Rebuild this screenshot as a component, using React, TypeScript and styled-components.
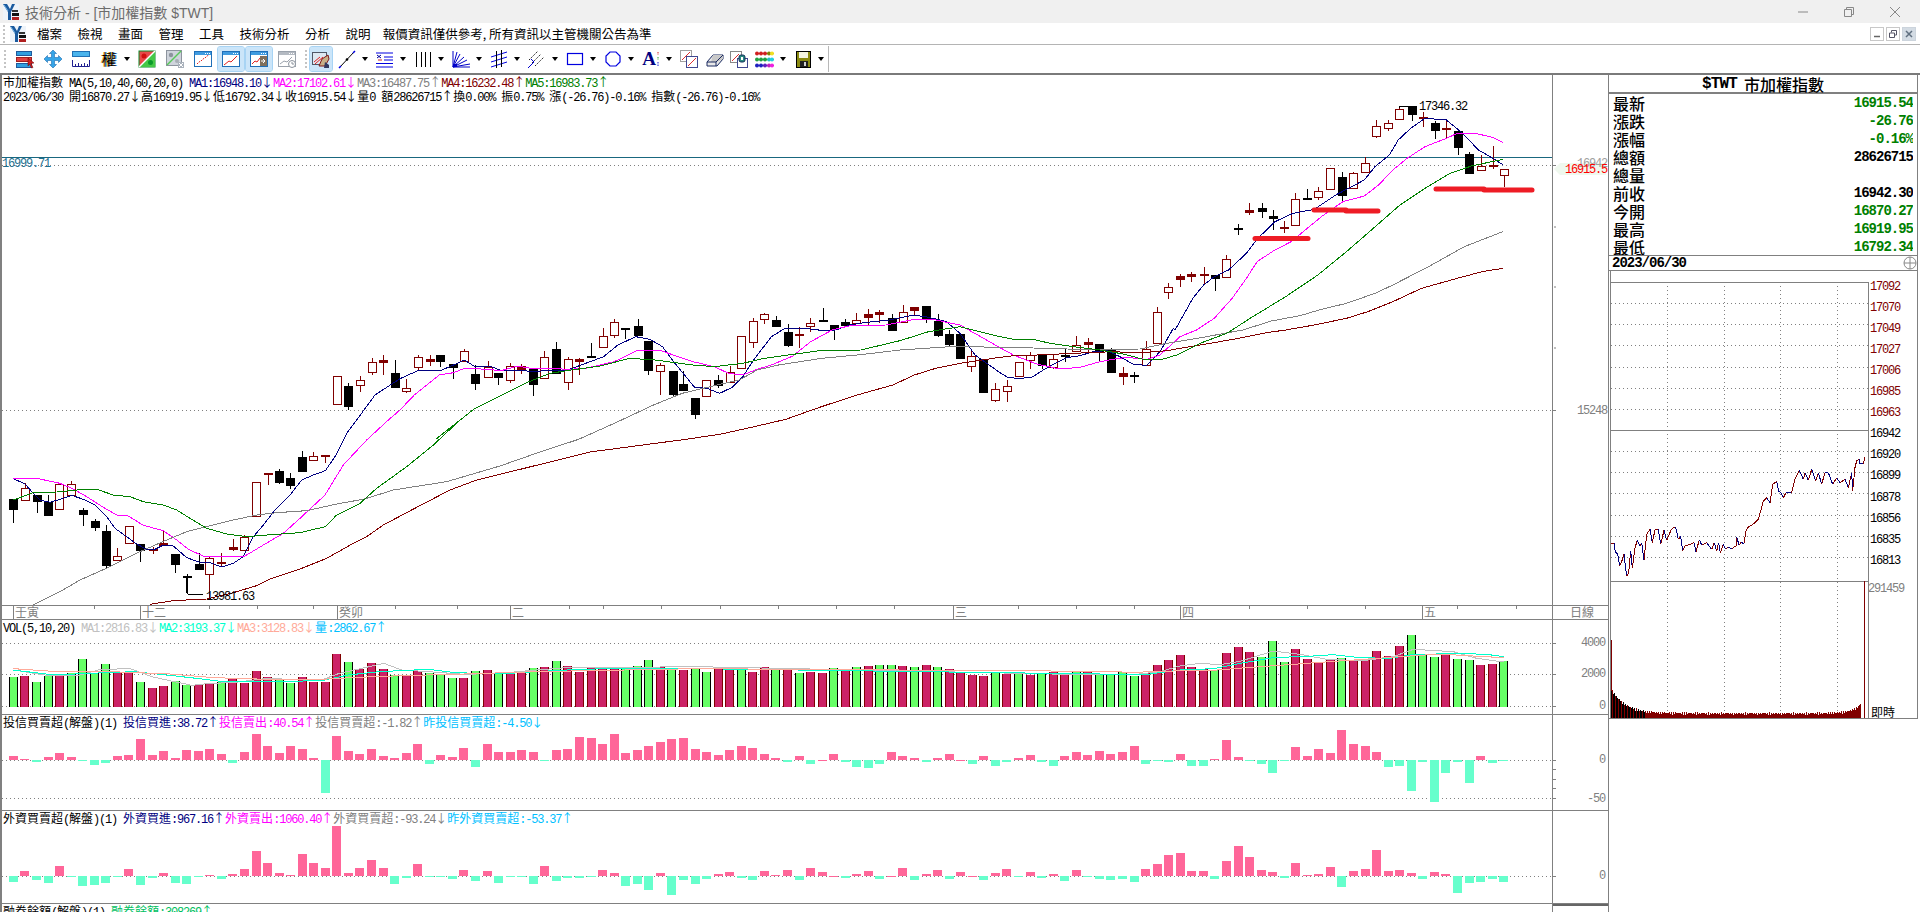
import React from "react";
import styled, { createGlobalStyle } from "styled-components";

const GlobalStyle = createGlobalStyle`
  html, body {
    margin: 0;
    background: #fff;
    overflow: hidden;
  }
`;

const CJK = `"Noto Sans CJK TC", "Noto Sans CJK SC", sans-serif`;
const MONO = `"Liberation Mono", "Noto Sans CJK TC", monospace`;

/* ---------- chart data, read off the chart in crop coordinates ---------- */

type Pt = number[];
const crop = (ox: number, oy: number, sx: number, sy: number) => (pts: Pt[]) =>
  pts.map(([x, y]) => [ox + x / sx, oy + y / sy]);
const z6 = crop(0, 420, 3, 3);
const z9 = crop(400, 280, 2.8, 3);
const z10 = crop(1000, 280, 3, 3);
const z5 = crop(1000, 90, 2.8, 3);
const zv4 = crop(0, 590, 2.24, 3);
const zv8 = crop(1100, 590, 3, 3);
const pts = (list: Pt[]) => list.map((p) => p.join(",")).join(" ");

// x, body top, body bottom, wick top, wick bottom, 0 = up (hollow) 1 = down (black)
const candleRows = (ox: number, oy: number, sx: number, rows: number[][]) =>
  rows.map(([x, a, b, c, d, k]) => [ox + x / sx, oy + a / 3, oy + b / 3, oy + c / 3, oy + d / 3, k]);

const candles = [
  ...candleRows(0, 420, 3, [
    [40, 238, 268, 238, 308, 1], [76, 205, 241, 190, 241, 0], [110, 226, 245, 226, 278, 1], [145, 245, 284, 225, 287, 1],
    [178, 193, 268, 190, 268, 0], [214, 193, 225, 184, 225, 0], [248, 270, 281, 264, 318, 1], [284, 304, 323, 297, 332, 1],
    [317, 334, 437, 316, 443, 1], [352, 409, 421, 385, 423, 0], [388, 319, 370, 319, 370, 0], [421, 373, 391, 373, 425, 1],
    [458, 388, 392, 380, 401, 0], [490, 370, 376, 332, 376, 0], [526, 403, 434, 403, 458, 1], [560, 468, 472, 462, 518, 1],
    [596, 433, 449, 400, 449, 1], [628, 415, 463, 410, 537, 0], [664, 426, 430, 400, 437, 0], [700, 382, 387, 358, 392, 0],
    [733, 350, 389, 345, 389, 0], [769, 187, 288, 187, 288, 0], [803, 160, 164, 158, 194, 0], [838, 154, 186, 148, 192, 1],
    [871, 174, 194, 159, 206, 1], [907, 111, 153, 93, 155, 1], [940, 109, 121, 97, 121, 0], [976, 105, 109, 105, 128, 0],
  ]),
  [337, 376, 404, 376, 404, 0], [348, 386, 406, 383, 410, 1], [360, 380, 385, 376, 392, 0], [372, 362, 372, 358, 375, 0],
  [383, 360, 362, 355, 375, 0], [395, 373, 387, 360, 387, 1],
  ...candleRows(400, 280, 2.8, [
    [18, 325, 335, 297, 338, 0], [49, 232, 263, 225, 270, 0], [83, 237, 242, 225, 257, 0], [113, 225, 242, 225, 260, 1],
    [147, 252, 261, 252, 297, 1], [180, 214, 243, 207, 243, 0], [211, 282, 309, 255, 330, 1], [245, 260, 290, 243, 290, 0],
    [275, 279, 290, 279, 315, 1], [309, 259, 302, 250, 308, 0], [340, 258, 266, 253, 281, 0], [373, 265, 314, 265, 348, 1],
    [404, 232, 296, 213, 296, 0], [438, 207, 278, 186, 278, 1], [471, 238, 307, 232, 330, 0], [502, 238, 245, 233, 285, 0],
    [536, 229, 233, 189, 233, 1], [567, 169, 203, 144, 203, 0], [600, 127, 167, 117, 173, 0], [631, 143, 146, 143, 178, 1],
    [665, 138, 165, 117, 165, 1], [695, 183, 270, 183, 285, 1], [729, 256, 274, 250, 345, 0], [763, 273, 342, 273, 347, 1],
    [793, 312, 330, 272, 330, 1], [827, 354, 402, 354, 417, 1], [858, 301, 350, 301, 350, 0], [891, 300, 314, 285, 323, 1],
    [923, 277, 308, 259, 308, 0], [956, 169, 266, 169, 266, 0], [987, 124, 187, 113, 203, 0], [1020, 102, 118, 98, 131, 0],
    [1054, 120, 137, 108, 137, 1], [1085, 156, 194, 133, 200, 1], [1118, 163, 167, 140, 204, 0], [1149, 130, 140, 114, 155, 0],
    [1183, 121, 124, 84, 124, 1], [1214, 135, 147, 135, 180, 1], [1247, 126, 134, 117, 134, 1], [1278, 119, 129, 98, 129, 0],
    [1311, 103, 112, 86, 135, 0], [1342, 95, 100, 90, 128, 0], [1377, 115, 150, 102, 150, 1], [1409, 97, 127, 75, 127, 0],
    [1440, 82, 91, 82, 105, 0], [1474, 78, 116, 78, 128, 1], [1505, 122, 164, 102, 170, 1], [1538, 162, 192, 150, 197, 1],
    [1568, 163, 236, 163, 236, 1],
  ]),
  [971, 356, 366, 350, 372, 0], [983, 359, 392, 359, 393, 1], [995, 389, 400, 383, 402, 0],
  ...candleRows(1000, 280, 3, [
    [22, 319, 335, 300, 365, 0], [56, 247, 290, 247, 290, 0], [91, 225, 241, 217, 266, 0], [125, 225, 256, 225, 266, 1],
    [160, 236, 260, 225, 268, 0], [194, 224, 228, 207, 245, 1], [229, 196, 214, 168, 214, 0], [263, 185, 190, 174, 220, 0],
    [298, 192, 215, 192, 243, 1], [333, 210, 275, 205, 277, 1], [368, 280, 289, 262, 314, 0], [403, 286, 290, 276, 308, 1],
    [437, 208, 257, 183, 257, 0], [472, 97, 190, 82, 190, 0],
  ]),
  ...candleRows(1000, 90, 2.8, [
    [471, 592, 607, 580, 627, 0], [505, 559, 568, 552, 590, 0], [536, 553, 560, 546, 575, 0], [570, 551, 555, 531, 584, 0],
    [603, 555, 563, 555, 603, 1], [634, 508, 562, 495, 562, 0], [667, 414, 417, 403, 435, 1], [698, 361, 368, 340, 374, 0],
    [733, 355, 365, 340, 384, 1], [763, 378, 383, 360, 420, 1], [796, 410, 414, 393, 428, 0], [827, 328, 407, 310, 407, 0],
    [860, 325, 327, 297, 329, 1], [891, 304, 323, 291, 330, 0], [925, 235, 298, 235, 298, 0], [958, 261, 315, 246, 333, 1],
    [989, 250, 296, 247, 296, 0], [1023, 219, 245, 202, 245, 0], [1054, 109, 140, 90, 143, 0], [1087, 100, 116, 90, 122, 0],
    [1118, 58, 88, 52, 88, 0], [1153, 48, 73, 48, 92, 1], [1183, 81, 85, 67, 110, 0], [1217, 99, 120, 93, 147, 1],
    [1250, 115, 119, 93, 143, 0], [1281, 124, 173, 124, 194, 1], [1314, 192, 248, 186, 248, 1], [1346, 228, 241, 195, 241, 0],
    [1379, 226, 230, 168, 238, 0], [1410, 238, 256, 238, 291, 0],
  ]),
];

const movingAverages = [
  {
    color: "#000080",
    line: [
      ...z6([[40, 176], [75, 192], [100, 220], [120, 240], [150, 247], [190, 235], [215, 226], [250, 238], [285, 255], [320, 290], [345, 325], [380, 350], [410, 372], [440, 388], [465, 388], [490, 375], [520, 378], [560, 413], [600, 427], [630, 428], [665, 441], [700, 430], [730, 410], [760, 350], [790, 315], [825, 270], [870, 225], [905, 180], [940, 165], [976, 152], [1005, 110], [1040, 40], [1070, 0]]),
      [375, 395],
      ...z9([[0, 296], [50, 272], [110, 273], [150, 255], [180, 240], [210, 260], [250, 258], [280, 270], [340, 270], [370, 276], [420, 270], [470, 270], [520, 250], [570, 230], [610, 195], [660, 170], [700, 178], [735, 200], [770, 250], [825, 322], [860, 325], [895, 340], [930, 322], [960, 290], [990, 240], [1040, 170], [1075, 147], [1130, 145], [1180, 151], [1220, 150], [1260, 135], [1300, 128], [1370, 120], [1440, 105], [1480, 112], [1530, 125], [1568, 160]]),
      [975, 355],
      ...z10([[0, 278], [25, 293], [60, 295], [95, 292], [130, 270], [165, 250], [200, 233], [240, 227], [280, 215], [320, 212], [360, 230], [400, 253], [440, 256], [480, 215], [520, 145]]),
      ...z5([[490, 720], [540, 625], [570, 585], [600, 560], [640, 540], [690, 490], [720, 447], [770, 395], [820, 370], [880, 358], [940, 315], [1020, 270], [1050, 230], [1090, 195], [1115, 150], [1150, 115], [1190, 85], [1250, 90], [1290, 125], [1340, 180], [1380, 205], [1408, 224]]),
    ],
  },
  {
    color: "#ff00ff",
    line: [
      ...z6([[40, 175], [110, 175], [180, 190], [220, 207], [260, 230], [310, 262], [350, 285], [385, 288], [430, 316], [490, 332], [530, 360], [565, 388], [610, 408], [680, 408], [735, 408], [790, 375], [850, 340], [900, 295], [975, 225], [1030, 135], [1100, 60], [1165, 0]]),
      ...z9([[0, 390], [40, 345], [110, 285], [150, 278], [180, 265], [250, 268], [280, 273], [330, 258], [370, 266], [420, 265], [470, 268], [520, 265], [600, 245], [660, 213], [730, 212], [820, 245], [880, 260], [920, 280], [960, 285], [1000, 268], [1040, 255], [1100, 228], [1150, 185], [1210, 150], [1260, 137], [1360, 135], [1440, 118], [1500, 120], [1568, 135]]),
      ...z10([[0, 203], [40, 225], [110, 252], [180, 267], [240, 262], [300, 245], [340, 238], [380, 232], [440, 238], [480, 225], [540, 170]]),
      ...z5([[550, 720], [600, 685], [650, 625], [690, 565], [720, 515], [765, 483], [815, 455], [900, 380], [960, 335], [1020, 318], [1060, 285], [1100, 240], [1140, 205], [1190, 170], [1250, 145], [1280, 130], [1330, 130], [1380, 142], [1408, 157]]),
    ],
  },
  {
    color: "#808080",
    line: [
      ...z6([[100, 555], [180, 515], [240, 480], [330, 440], [420, 395], [500, 360], [560, 335], [620, 320], [700, 300], [770, 285], [830, 278], [920, 272], [1020, 250], [1090, 238], [1180, 210], [1340, 185], [1500, 138]]),
      [540, 452],
      ...z9([[500, 478], [600, 430], [710, 375], [790, 340], [900, 312], [950, 300], [1000, 270], [1060, 255], [1180, 235], [1290, 224], [1400, 210], [1568, 198]]),
      ...z10([[0, 203], [100, 204], [200, 207], [300, 208], [420, 207], [500, 190], [620, 170], [700, 155]]),
      ...z5([[680, 720], [760, 693], [840, 677], [900, 658], [970, 640], [1050, 610], [1100, 585], [1200, 530], [1300, 470], [1408, 425]]),
    ],
  },
  {
    color: "#800000",
    line: [
      ...z6([[450, 553], [520, 542], [620, 537], [700, 518], [770, 497], [810, 477], [900, 447], [980, 415], [1060, 370], [1100, 350], [1150, 315], [1250, 262], [1350, 210], [1430, 180], [1500, 163]]),
      [590, 452],
      ...z9([[800, 478], [900, 462], [1000, 438], [1080, 418], [1180, 380], [1280, 345], [1380, 315], [1440, 285], [1500, 265], [1568, 250]]),
      ...z10([[0, 232], [60, 225], [110, 225], [220, 220], [340, 215], [420, 219], [500, 212], [600, 195], [700, 178], [800, 158]]),
      ...z5([[800, 720], [880, 705], [970, 685], [1030, 665], [1100, 635], [1180, 595], [1280, 565], [1350, 545], [1408, 535]]),
    ],
  },
  {
    color: "#008000",
    line: [
      ...z6([[40, 240], [100, 218], [170, 216], [250, 208], [290, 208], [340, 225], [390, 230], [430, 245], [490, 255], [530, 270], [570, 295], [620, 325], [680, 342], [740, 350], [800, 345], [900, 338], [976, 320], [1010, 285], [1080, 250], [1130, 205], [1220, 140], [1300, 75], [1380, 0]]),
      ...z9([[100, 478], [210, 385], [240, 370], [350, 310], [420, 280], [480, 270], [560, 258], [640, 236], [700, 238], [820, 255], [880, 260], [960, 250], [1020, 235], [1175, 212], [1290, 210], [1400, 182], [1480, 155], [1568, 140]]),
      ...z10([[0, 170], [40, 178], [100, 178], [150, 190], [220, 200], [300, 210], [370, 222], [430, 238], [480, 240], [530, 225], [600, 190], [680, 160]]),
      ...z5([[650, 720], [700, 685], [800, 620], [890, 555], [970, 485], [1040, 420], [1120, 345], [1190, 295], [1260, 250], [1320, 228], [1408, 208]]),
    ],
  },
];

const redMarks = [[1255, 1308, 238.5], [1314, 1346, 210], [1346, 1378, 211], [1436, 1484, 189], [1484, 1532, 190]];

const barX = (i: number) => 13.4 + 11.553 * i;
const cropY = (v: number) => 590 + v / 3;

// negative = green (down day), positive = crimson (up day); values are crop y of the bar top
const volume = [
  -260, 258, -275, -258, 258, -250, -207, -250, -222, 245, 245, -275, 294, 288, -273, -284, 285, 278, -275, 265,
  280, 243, 262, -270, -278, 262, 275, 275, 192, -216, 238, 219, 238, -255, 258, 243, -250, -252, -264, 264,
  -243, 240, -252, 252, 243, -234, 231, -213, 228, 245, 232, 232, 238, -232, -228, -210, 232, -235, 240, -233,
  -245, 238, 235, -240, 245, 232, -238, 240, -250, 245, 250, -235, 240, -232, 228, -226, -224, 228, -230, 226,
  -232, 236, 245, 255, 258, -250, 252, -248, 255, -250, 245, 255, -245, 245,
  -253, -253, -245, -257, 248, 225, 210, 195, 232, 238, -240, 189, 171, 186, -200, -153, -216, 177, 207, 216,
  207, -205, 210, 210, 183, 198, 168, -135, -195, -200, 192, -207, -210, 225, 222, -213,
];

const volLines = [
  {
    color: "#c0c0c0",
    line: [
      ...zv4([[30, 240], [100, 255], [180, 255], [220, 240], [290, 235], [340, 260], [380, 272], [430, 286], [470, 280], [520, 278], [600, 265], [680, 270], [720, 270], [760, 250], [810, 235], [860, 220], [900, 240], [960, 245], [1040, 253], [1120, 250], [1200, 240], [1280, 232], [1400, 232], [1560, 230]]),
      ...zv8([[0, 255], [90, 255], [180, 245], [240, 228], [300, 220], [360, 224], [420, 214], [520, 183], [600, 193], [680, 208], [790, 212], [880, 200], [940, 178], [1060, 185], [1130, 205], [1211, 216]]),
    ],
  },
  {
    color: "#00ffcc",
    line: [
      ...zv4([[30, 240], [120, 255], [200, 250], [300, 245], [380, 256], [440, 265], [500, 275], [600, 275], [720, 272], [780, 255], [850, 245], [960, 238], [1020, 248], [1120, 252], [1200, 245], [1300, 238], [1400, 235], [1560, 236]]),
      ...zv8([[0, 252], [90, 255], [150, 252], [240, 240], [340, 236], [410, 222], [520, 203], [640, 198], [700, 194], [780, 203], [870, 205], [930, 195], [1060, 190], [1160, 193], [1211, 200]]),
    ],
  },
  {
    color: "#ffaa99",
    line: [
      ...zv4([[30, 236], [130, 245], [250, 245], [380, 252], [480, 263], [600, 268], [720, 268], [800, 262], [900, 257], [1040, 252], [1200, 245], [1400, 240], [1560, 236]]),
      ...zv8([[0, 244], [100, 247], [220, 243], [340, 241], [440, 233], [540, 226], [660, 217], [790, 208], [900, 200], [1020, 192], [1100, 197], [1211, 203]]),
    ],
  },
];

const trustBars = [
  498, 508, 515, 501, 489, 501, 512, 525, 519, 498, 495, 447, 495, 483, 504, 480, 483, 477, 492, 519,
  486, 432, 468, 489, 468, 477, 504, 608, 438, 483, 492, 477, 498, 504, 489, 462, 522, 495, 501, 474,
  531, 462, 486, 486, 480, 486, 512, 480, 477, 441, 444, 462, 432, 489, 480, 468, 456, 447, 444, 477,
  486, 495, 480, 468, 474, 492, 504, 516, 498, 522, 510, 492, 516, 531, 534, 522, 486, 498, 504, 516,
  504, 492, 510, 522, 498, 528, 516, 504, 495, 516, 528, 498, 486, 495,
  483, 492, 486, 468, 522, 514, 516, 492, 528, 528, 507, 450, 501, 513, 522, 549, 513, 471, 498, 477,
  489, 420, 462, 468, 486, 531, 528, 603, 516, 636, 549, 516, 579, 498, 519, 513,
];

const foreignBars = [
  876, 843, 870, 879, 828, 860, 888, 885, 879, 860, 837, 885, 864, 849, 879, 882, 860, 855, 867, 852,
  837, 783, 819, 849, 855, 792, 819, 834, 708, 849, 834, 810, 834, 882, 864, 822, 860, 860, 867, 840,
  873, 843, 879, 860, 860, 882, 828, 873, 864, 863, 860, 840, 849, 888, 882, 900, 849, 915, 870, 882,
  866, 852, 846, 864, 870, 843, 855, 840, 870, 834, 846, 858, 864, 852, 843, 867, 858, 834, 870, 852,
  840, 866, 846, 858, 870, 850, 838, 860, 846, 865, 852, 872, 840, 862,
  867, 870, 867, 876, 837, 822, 795, 789, 843, 843, 867, 813, 768, 801, 840, 846, 864, 819, 855, 852,
  831, 891, 843, 837, 780, 843, 840, 849, 867, 846, 852, 909, 879, 876, 867, 876,
];

const miniPrice = crop(1540, 270, 3, 3)([
  [214, 817], [222, 816], [226, 843], [233, 850], [239, 885], [244, 875], [252, 850], [260, 915], [266, 905], [272, 840], [277, 890], [285, 830], [292, 808], [300, 825], [305, 815], [312, 868], [320, 790], [330, 775], [337, 815], [345, 776], [355, 775], [362, 820], [372, 778], [380, 808], [395, 773], [407, 768], [415, 805], [422, 796], [428, 840], [435, 825], [450, 820], [462, 815], [468, 843], [478, 806], [485, 822], [500, 815], [515, 835], [523, 815], [530, 840], [536, 815], [541, 845], [550, 820], [557, 835], [565, 828], [575, 833], [588, 825], [590, 797], [597, 822], [603, 815], [612, 817], [618, 780], [625, 768], [640, 760], [655, 745], [662, 720], [670, 690], [680, 680], [690, 695], [698, 640], [710, 632], [716, 660], [722, 665], [730, 680], [738, 665], [755, 665], [765, 625], [778, 598], [790, 625], [795, 605], [805, 628], [815, 595], [827, 630], [835, 605], [845, 640], [855, 605], [865, 605], [878, 640], [890, 620], [900, 635], [915, 625], [925, 650], [935, 605], [938, 660], [945, 590], [950, 570], [957, 565], [960, 578], [970, 578], [975, 558],
]);

const miniLabels = [
  "17092", "17070", "17049", "17027", "17006", "16985", "16963", "16942", "16920", "16899", "16878", "16856", "16835", "16813",
];
const miniGrid = [281, 302, 323, 344, 366, 387, 408, 450, 471, 492, 514, 535, 556];

const dateTicks = [94, 209, 257, 313, 395, 457, 569, 603, 661, 720, 778, 836, 894, 1018, 1076, 1134, 1249, 1307, 1365, 1457, 1516];
const dateMarks = [
  { x: 13, label: "壬寅" }, { x: 140, label: "十二" }, { x: 337, label: "癸卯" }, { x: 510, label: "二" },
  { x: 953, label: "三" }, { x: 1180, label: "四" }, { x: 1422, label: "五" },
];

const quotes = [
  { label: "最新", value: "16915.54", color: "#008000" },
  { label: "漲跌", value: "-26.76", color: "#008000" },
  { label: "漲幅", value: "-0.16%", color: "#008000" },
  { label: "總額", value: "28626715", color: "#000" },
  { label: "總量", value: "", color: "#000" },
  { label: "前收", value: "16942.30", color: "#000" },
  { label: "今開", value: "16870.27", color: "#008000" },
  { label: "最高", value: "16919.95", color: "#008000" },
  { label: "最低", value: "16792.34", color: "#008000" },
];

const menus = ["檔案", "檢視", "畫面", "管理", "工具", "技術分析", "分析", "說明"];

/* ---------- page chrome ---------- */

const Win = styled.div`
  width: 1920px;
  height: 912px;
  display: flex;
  flex-direction: column;
  overflow: hidden;
  background: #fff;
`;

const TitleBar = styled.div`
  height: 23px;
  flex: none;
  display: flex;
  align-items: center;
  padding-left: 3px;
  background: #f0f0f0;
`;

const TitleText = styled.span`
  margin-left: 6px;
  font: 14px "Liberation Sans", ${CJK};
  color: #6c6c6c;
`;

const WinControls = styled.div`
  margin-left: auto;
  padding-right: 2px;
  display: flex;
`;

const WinButton = styled.div`
  width: 46px;
  height: 23px;
  display: flex;
  align-items: center;
  justify-content: center;
`;

const MenuBar = styled.div`
  height: 22px;
  flex: none;
  box-sizing: border-box;
  display: flex;
  align-items: center;
  padding: 0 4px 0 3px;
  border-bottom: 1px solid #b4b4b4;
  font: 12.5px ${CJK};
  color: #000;
`;

const Grip = styled.div`
  width: 2px;
  height: 18px;
  flex: none;
  border-left: 2px dotted #c4c4c4;
  margin-right: 3px;
`;

const MenuItems = styled.div`
  display: flex;
  gap: 15.5px;
  margin-left: 11px;
`;

const MenuNote = styled.span`
  margin-left: 12px;
  white-space: pre;
`;

const MdiButtons = styled.div`
  margin-left: auto;
  display: flex;
  gap: 2px;
`;

const MdiButton = styled.div<{ $close?: boolean }>`
  width: 14px;
  height: 14px;
  box-sizing: border-box;
  border: 1px solid ${(p) => (p.$close ? "#ccd4dc" : "#c8c8c8")};
  background: ${(p) => (p.$close ? "#d4dce4" : "#fff")};
  display: flex;
  align-items: center;
  justify-content: center;
`;

const Toolbar = styled.div`
  height: 30px;
  flex: none;
  box-sizing: border-box;
  display: flex;
  align-items: center;
  padding-left: 4px;
  border-bottom: 2px solid #7a7a7a;
`;

const ToolGrip = styled(Grip)`
  margin: 0 3px 0 0;
`;

const ToolGap = styled.div`
  width: 8px;
  height: 26px;
  flex: none;
  display: flex;
  justify-content: flex-end;
`;

const ToolGapGrip = styled(Grip)`
  margin: 4px 0 0;
`;

const ToolButton = styled.div<{ $w?: number; $on?: boolean }>`
  width: ${(p) => p.$w ?? 28}px;
  height: 26px;
  flex: none;
  box-sizing: border-box;
  display: flex;
  align-items: center;
  justify-content: center;
  border: 1px solid ${(p) => (p.$on ? "#a8d4f4" : "transparent")};
  border-radius: 3px;
  background: ${(p) => (p.$on ? "#cbe5f9" : "transparent")};
  background-clip: padding-box;
`;

const CaretButton = styled.div`
  width: 38px;
  height: 26px;
  flex: none;
  display: flex;
  align-items: center;
`;

const IconCell = styled.div`
  width: 28px;
  display: flex;
  justify-content: center;
`;

const Caret = styled.div`
  width: 0;
  height: 0;
  border: 3px solid transparent;
  border-top: 4px solid #000;
  border-bottom: 0;
  margin-left: 1px;
`;

const ToolEnd = styled.div`
  width: 1px;
  height: 26px;
  margin-left: 1px;
  background: #b8b8b8;
`;

const GlyphIcon = styled.span`
  font: 15px/20px ${CJK};
  color: #000;
  text-shadow: -1px 0 0 #f0b030, 1px 0 0 #3090e0;
`;

const SerifA = styled.span`
  font: bold 19px/20px "Liberation Serif", serif;
  color: #000080;
`;

const TextMarks = styled.svg`
  width: 4px;
  height: 20px;
  display: block;
`;

/* ---------- chart column ---------- */

const Workspace = styled.div`
  flex: 1;
  min-height: 0;
  display: flex;
  border-left: 2px solid #808080;
`;

const ChartColumn = styled.div`
  width: 1606px;
  flex: none;
  display: flex;
  flex-direction: column;
`;

const Panel = styled.div<{ $h: number }>`
  height: ${(p) => p.$h}px;
  flex: none;
  box-sizing: border-box;
  display: flex;
  overflow: hidden;
  border-bottom: 1px solid #808080;
`;

const LastPanel = styled.div`
  height: 8px;
  flex: none;
  display: flex;
  overflow: hidden;
`;

const Plot = styled.div`
  position: relative;
  width: 1551px;
  flex: none;
  box-sizing: border-box;
  border-right: 1px solid #808080;
`;

const Axis = styled.div`
  width: 55px;
  flex: none;
`;

const LastAxis = styled(Axis)`
  border-top: 2px solid #666;
`;

const Chart = styled.svg`
  display: block;
`;

const Legend = styled.div`
  position: absolute;
  top: 0;
  left: 1px;
  font: 12px/14px ${MONO};
  letter-spacing: -1.2px;
  white-space: pre;
  color: #000;
  pointer-events: none;
`;

const LegendRow = styled.div`
  height: 14px;
  overflow: visible;
`;

const CjkRun = styled.span`
  font-family: ${CJK};
  letter-spacing: 0;
  line-height: 14px;
`;

const Seg = styled.span<{ $c?: string }>`
  color: ${(p) => p.$c ?? "#000"};
`;

const ChartText = styled.text`
  font: 12px ${MONO};
  letter-spacing: -1.2px;
  white-space: pre;
`;

const ChartCjk = styled.text`
  font: 12px ${CJK};
`;

/* ---------- quote panel ---------- */

const SidePanel = styled.div`
  flex: 1;
  display: flex;
  flex-direction: column;
  border-left: 1px solid #808080;
  margin-right: 2px;
`;

const SideTitle = styled.div`
  height: 19px;
  flex: none;
  box-sizing: border-box;
  display: flex;
  align-items: center;
  justify-content: center;
  gap: 7px;
  border-bottom: 2px solid #808080;
  border-right: 1px solid #808080;
  font: bold 16px/16px ${MONO};
  letter-spacing: -0.8px;
`;

const SideCjk = styled.span`
  font: 500 16px/16px ${CJK};
  letter-spacing: 0;
`;

const QuoteList = styled.div`
  height: 161px;
  flex: none;
  box-sizing: border-box;
  padding: 0 4px;
  overflow: hidden;
  border-right: 1px solid #808080;
`;

const QuoteRow = styled.div`
  height: 18px;
  display: flex;
  align-items: center;
  justify-content: space-between;
  overflow: hidden;
`;

const QuoteLabel = styled.span`
  font: 500 16px/18px ${CJK};
  height: 18px;
  color: #000;
`;

const QuoteValue = styled.span<{ $c: string }>`
  font: bold 14px/18px ${MONO};
  letter-spacing: -1px;
  color: ${(p) => p.$c};
`;

const DateRow = styled.div`
  height: 16px;
  flex: none;
  box-sizing: border-box;
  display: flex;
  align-items: center;
  justify-content: space-between;
  padding-left: 3px;
  border-top: 1px solid #808080;
  border-bottom: 1px solid #808080;
  border-right: 1px solid #808080;
  font: bold 14px/14px ${MONO};
  letter-spacing: -1px;
`;

/* ---------- small drawings ---------- */

const Ic = styled.svg`
  width: 20px;
  height: 20px;
  display: block;
`;

const TitleLogo = () => (
  <svg width="16" height="16" viewBox="0 0 16 16">
    <rect width="16" height="16" fill="#eef4fa" />
    <path d="M0 0h4l3 5 2-5h3L8 8v8H5V8z" fill="#1a5a9e" />
    <path d="M1 1l4 6" stroke="#7ab8e8" />
    <rect x="9" y="6" width="6" height="2" fill="#333" />
    <rect x="9" y="9" width="7" height="3" fill="#111" />
    <rect x="9" y="13" width="7" height="3" fill="#b02020" />
  </svg>
);

const WindowFrame = ({ color = "#1f6fb8", bar = "#3f9be0" }: { color?: string; bar?: string }) => (
  <>
    <rect x="1.5" y="2.5" width="17" height="15" fill="#fff" stroke={color} />
    <rect x="2" y="3" width="16" height="3" fill={bar} />
    <path d="M12 4.5h5" stroke="#fff" strokeDasharray="1 1" />
  </>
);

const Dropdown = ({ children }: { children: React.ReactNode }) => (
  <CaretButton>
    <IconCell>{children}</IconCell>
    <Caret />
  </CaretButton>
);

const Toolbar1 = () => (
  <>
    <ToolButton>
      <Ic viewBox="0 0 20 20">
        <rect x="1.5" y="2.5" width="15" height="4" fill="#2f9fe0" stroke="#205a9c" />
        <rect x="1.5" y="8.5" width="15" height="4" fill="#e04040" stroke="#a02020" />
        <rect x="1.5" y="14.5" width="15" height="4" fill="#2f9fe0" stroke="#205a9c" />
        <path d="M13 9l6 5-3 .5 2 4-1.5.5-2-4L13 17z" fill="#d02020" stroke="#600" strokeWidth=".5" />
      </Ic>
    </ToolButton>
    <ToolButton>
      <Ic viewBox="0 0 20 20">
        <path d="M10 1l3.500 3.500H11.500V8.500H15.500V6.500L19 10l-3.500 3.500v-2H11.500v4h2L10 19l-3.500-3.500h2v-4H4.500v2L1 10l3.500-3.500v2h4v-4h-2z" fill="#35a5e8" stroke="#1c6cb0" strokeWidth=".6" />
      </Ic>
    </ToolButton>
    <ToolButton>
      <Ic viewBox="0 0 20 20">
        <rect x="1.500" y="2.500" width="17" height="5" fill="#4ab4ec" stroke="#2070b4" />
        <path d="M1.500 11v6.500h17V11M4.500 17v-2M7.500 17v-3M10.500 17v-2M13.500 17v-3M16.500 17v-2" stroke="#202090" fill="none" />
      </Ic>
    </ToolButton>
    <CaretButton>
      <IconCell>
        <GlyphIcon>權</GlyphIcon>
      </IconCell>
      <Caret />
    </CaretButton>
    <ToolButton>
      <Ic viewBox="0 0 20 20">
        <rect x="2" y="2" width="16" height="16" fill="#e84a4a" stroke="#0a8a2a" />
        <path d="M18 2v16H2z" fill="#46c846" />
        <path d="M18 2L2 18" stroke="#fff" strokeWidth="1.500" />
        <circle cx="7" cy="7" r="2.500" fill="#d01010" />
        <circle cx="13.500" cy="13.500" r="2.500" fill="#0a9a2a" />
      </Ic>
    </ToolButton>
    <ToolButton>
      <Ic viewBox="0 0 20 20">
        <rect x="1.500" y="1.500" width="15" height="15" fill="#cfd4dc" stroke="#8d949e" />
        <path d="M16 2L2 16" stroke="#58c858" strokeWidth="1.500" />
        <circle cx="6" cy="6" r="2.200" fill="#8d949e" />
        <circle cx="12" cy="12" r="2" fill="#a8aeb6" />
        <rect x="13" y="13" width="6" height="6" fill="#aab2bc" />
        <path d="M14 14l4 4m0-4l-4 4" stroke="#fff" />
      </Ic>
    </ToolButton>
    <ToolButton>
      <Ic viewBox="0 0 20 20">
        <WindowFrame />
        <path d="M4 15l2-2 2-1 2-2 2-1 2-2 2-1" stroke="#e02020" strokeDasharray="1.500 1" fill="none" />
      </Ic>
    </ToolButton>
    <ToolButton $on>
      <Ic viewBox="0 0 20 20">
        <WindowFrame />
        <path d="M3 16l5-4 2 1 6-6" stroke="#e02020" fill="none" />
      </Ic>
    </ToolButton>
    <ToolButton $on>
      <Ic viewBox="0 0 20 20">
        <WindowFrame />
        <path d="M3 15l3-3 2 1 3-4" stroke="#e02020" fill="none" />
        <rect x="11" y="7" width="7" height="10" fill="#80705c" />
        <path d="M12 12h4m-2-2l2 2-2 2" stroke="#fff" fill="none" />
      </Ic>
    </ToolButton>
    <ToolButton>
      <Ic viewBox="0 0 20 20">
        <WindowFrame color="#9aa2ac" bar="#b4bac2" />
        <path d="M3 15l4-3 3 1 5-5" stroke="#9aa2ac" fill="none" />
        <circle cx="15" cy="15" r="3.500" fill="#fff" stroke="#8a929c" />
        <path d="M15 13v2h2" stroke="#8a929c" fill="none" />
      </Ic>
    </ToolButton>
  </>
);

const Toolbar2 = () => (
  <>
    <ToolButton $w={24} $on>
      <Ic viewBox="0 0 20 20">
        <rect x="1.500" y="3.500" width="14" height="12" fill="#dde8f2" stroke="#505868" />
        <path d="M3 13l6-5M4 15l8-7" stroke="#e02020" />
        <path d="M8 17l3-7 6-4 1 4-4 7z" fill="#c8b088" stroke="#801818" />
        <path d="M14 13l4 3v3h-5z" fill="#333a60" />
      </Ic>
    </ToolButton>
    <Dropdown>
      <Ic viewBox="0 0 20 20">
        <path d="M3 18L17 3" stroke="#000" />
        <path d="M2 19l2-2M16 4l2-2" stroke="#0000e0" strokeWidth="1.500" />
        <circle cx="10" cy="10.500" r="1.300" fill="#000" />
      </Ic>
    </Dropdown>
    <Dropdown>
      <Ic viewBox="0 0 20 20">
        <path d="M1 4h17M9 8h9M9 11h9M1 14.500h17M1 18h17" stroke="#0000e0" />
        <path d="M2 6l4 3m0-3L2 9" stroke="#0000a0" />
        <path d="M3 11h4" stroke="#d02020" />
      </Ic>
    </Dropdown>
    <Dropdown>
      <Ic viewBox="0 0 20 20">
        <path d="M3.500 3v15M8.500 3v15M12.500 3v15M17.500 3v15" stroke="#000" />
      </Ic>
    </Dropdown>
    <Dropdown>
      <Ic viewBox="0 0 20 20">
        <path d="M2 18V2M2 18l4-15M2 18l7-13M2 18l11-10M2 18l14-7M2 18l17-3M2 18h17" stroke="#0000c8" fill="none" />
        <path d="M2 15h4v3H2z" fill="#0000c8" />
      </Ic>
    </Dropdown>
    <Dropdown>
      <Ic viewBox="0 0 20 20">
        <path d="M2 8l16-5M2 13l16-5M2 18l16-5" stroke="#0000e0" />
        <path d="M7.500 2v17M12.500 1v17" stroke="#000" />
      </Ic>
    </Dropdown>
    <Dropdown>
      <Ic viewBox="0 0 20 20">
        <path d="M2 11L11 2M5 14l9-9M8 17l9-9" stroke="#222" strokeDasharray="1.500 1" />
        <path d="M1 19l6-6M4 10l3 3" stroke="#0000d0" />
      </Ic>
    </Dropdown>
    <Dropdown>
      <Ic viewBox="0 0 20 20">
        <rect x="2.500" y="4.500" width="15" height="11" fill="#fff" stroke="#0000e0" strokeWidth="1.200" />
      </Ic>
    </Dropdown>
    <Dropdown>
      <Ic viewBox="0 0 20 20">
        <path d="M7 3h6l4 4v6l-4 4H7l-4-4V7z" fill="#fff" stroke="#0000e0" strokeWidth="1.200" />
      </Ic>
    </Dropdown>
    <Dropdown>
      <SerifA>A</SerifA>
      <TextMarks viewBox="0 0 4 20">
        <path d="M2 3v3" stroke="#d02020" strokeDasharray="1.500 1" />
        <path d="M2 8v3" stroke="#20a020" strokeDasharray="1.500 1" />
        <path d="M2 13v4" stroke="#2020d0" strokeDasharray="1.500 1" />
      </TextMarks>
    </Dropdown>
    <ToolButton>
      <Ic viewBox="0 0 20 20">
        <rect x="1.500" y="1.500" width="11" height="11" fill="#fff" stroke="#a0a0a0" />
        <path d="M3 11l8-8" stroke="#e03030" />
        <rect x="7.500" y="7.500" width="11" height="11" fill="#fff" stroke="#404890" />
        <path d="M9 17l8-8" stroke="#e03030" />
      </Ic>
    </ToolButton>
    <ToolButton $w={24}>
      <Ic viewBox="0 0 20 20">
        <path d="M2 13L8 6h10v4l-6 7H2z" fill="#e8e8e8" stroke="#1a2a60" />
        <path d="M8 6h10v4l-6 3H6z" fill="#c8c8c8" />
        <path d="M2 13h9v4M11 13l7-7" stroke="#1a2a60" fill="none" />
      </Ic>
    </ToolButton>
    <ToolButton $w={24}>
      <Ic viewBox="0 0 20 20">
        <rect x="1.500" y="2.500" width="11" height="11" fill="#fff" stroke="#888" />
        <path d="M3 12l7-7" stroke="#e03030" />
        <rect x="8.500" y="9.500" width="10" height="9" fill="#fff" stroke="#404890" />
        <rect x="10" y="6" width="6" height="7" rx="2" fill="#2a8a80" stroke="#10305a" />
        <rect x="12" y="8" width="2" height="3" fill="#fff" />
      </Ic>
    </ToolButton>
    <Dropdown>
      <Ic viewBox="0 0 20 20">
        <path d="M1 4.500h18" stroke="#d02020" />
        <path d="M1 10.500h18" stroke="#20a040" />
        <path d="M1 16.500h18" stroke="#2020c0" />
        {[2, 6, 10, 14, 17].map((x, i) => (
          <React.Fragment key={x}>
            <circle cx={x} cy="4.500" r="2" fill={["#d02020", "#d02020", "#d02020", "#808000", "#f0e020"][i]} />
            <circle cx={x} cy="10.500" r="2" fill={["#20a040", "#20a040", "#20a040", "#20c0c0", "#20d0e0"][i]} />
            <circle cx={x} cy="16.500" r="2" fill={["#2020c0", "#2020c0", "#6020c0", "#c020c0", "#f020e0"][i]} />
          </React.Fragment>
        ))}
      </Ic>
    </Dropdown>
    <Dropdown>
      <Ic viewBox="0 0 20 20">
        <rect x="3" y="2" width="15" height="17" fill="#000" />
        <rect x="4" y="3" width="13" height="15" fill="#8a8a10" />
        <rect x="6" y="3" width="9" height="6" fill="#f4f4e0" />
        <rect x="7" y="12" width="8" height="6" fill="#202020" />
        <rect x="11" y="13" width="2" height="4" fill="#d0d0d0" />
      </Ic>
    </Dropdown>
    <ToolEnd />
  </>
);

/* ---------- chart parts ---------- */

// the terminal draws CJK and arrows full width and latin at half width
const WIDE = /([\u2190-\u2193\u3400-\u9fff]+)/;

const Mixed = ({ text }: { text: string }) => (
  <>
    {text.split(WIDE).map((run, i) => (WIDE.test(run) ? <CjkRun key={i}>{run}</CjkRun> : run))}
  </>
);

const LegendLine = ({ items }: { items: [string, string?][] }) => (
  <LegendRow>
    {items.map(([text, color], i) => (
      <Seg key={i} $c={color}>
        <Mixed text={text} />
      </Seg>
    ))}
  </LegendRow>
);

const Candle = ({ c }: { c: number[] }) => {
  const [x, top, bottom, wickTop, wickBottom, kind] = c;
  const cx = Math.round(x) + 0.5;
  const color = kind ? "#000" : "#800000";
  const solid = kind === 1 || bottom - top < 3.2;
  return (
    <g shapeRendering="crispEdges">
      <path d={`M${cx} ${Math.round(wickTop)}V${Math.round(wickBottom)}`} stroke={color} strokeWidth="1" />
      <rect
        x={cx - 4}
        y={Math.round(top) + 0.5}
        width="8"
        height={Math.max(1, Math.round(bottom - top))}
        fill={solid ? color : "#fff"}
        stroke={color}
      />
    </g>
  );
};

const Dotted = ({ y, color = "#808080" }: { y: number; color?: string }) => (
  <path d={`M2 ${y + 0.5}H1552`} stroke={color} strokeDasharray="1 3" shapeRendering="crispEdges" />
);

const MainChart = () => (
  <Chart width={1550} height={530} viewBox="2 75 1550 530">
    <Dotted y={165} />
    <Dotted y={410} />
    <path d="M2 157.500H1552" stroke="#19677f" shapeRendering="crispEdges" />
    <ChartText x={2} y={167} fill="#1f6f8f">16999.71</ChartText>
    {candles.map((c, i) => (
      <Candle key={i} c={c} />
    ))}
    {movingAverages.map((m) => (
      <polyline key={m.color} points={pts(m.line)} fill="none" stroke={m.color} shapeRendering="crispEdges" />
    ))}
    <polyline points="186.700,578 186.700,593 188,594 203,595" fill="none" stroke="#000" shapeRendering="crispEdges" />
    <ChartText x={206} y={600} fill="#000">13981.63</ChartText>
    <polyline points="1399,108 1399,107 1417,106" fill="none" stroke="#000" shapeRendering="crispEdges" />
    <ChartText x={1419} y={110} fill="#000">17346.32</ChartText>
    {redMarks.map(([a, b, y]) => (
      <line key={a} x1={a} x2={b} y1={y} y2={y} stroke="#ee1c25" strokeWidth="5" strokeLinecap="round" />
    ))}
  </Chart>
);

const MainAxis = () => (
  <Chart width={55} height={530} viewBox="1553 75 55 530">
    <path d="M1553 165.500h3M1554 227h2M1554 287h2M1554 348h2M1553 410.500h3" stroke="#808080" />
    <polygon points="1554,169 1560,163 1606,163 1606,175 1560,175" fill="#eff8ee" />
    <ChartText x={1577} y={167} fill="#a0a0a0">16942</ChartText>
    <ChartText x={1565} y={173} fill="#ff0000">16915.5</ChartText>
    <ChartText x={1577} y={414} fill="#808080">15248</ChartText>
  </Chart>
);

const DateAxis = () => (
  <Chart width={1550} height={13} viewBox="2 606 1550 13">
    {dateTicks.map((x) => (
      <path key={x} d={`M${x}.5 606v3`} stroke="#808080" />
    ))}
    {dateMarks.map((m) => (
      <g key={m.x}>
        <path d={`M${m.x}.5 606v13`} stroke="#808080" />
        <ChartCjk x={m.x + 2} y={617} fill="#808080">{m.label}</ChartCjk>
      </g>
    ))}
  </Chart>
);

const VolumeChart = () => (
  <Chart width={1550} height={94} viewBox="2 620 1550 94">
    <Dotted y={643} />
    <Dotted y={674} />
    <Dotted y={706} />
    {volume.map((v, i) => {
      const top = Math.round(cropY(Math.abs(v)));
      const left = Math.round(barX(i) - 4.5);
      const green = v < 0;
      const edge = green ? "#000" : "#800000";
      return (
        <g key={i} shapeRendering="crispEdges">
          <rect x={left} y={top} width="9" height={707 - top} fill={green ? "#66ff66" : "#cc2266"} />
          <path d={`M${left + 0.5} ${top}V707M${left + 8.5} ${top}V707`} stroke={edge} />
        </g>
      );
    })}
    {volLines.map((m) => (
      <polyline key={m.color} points={pts(m.line)} fill="none" stroke={m.color} shapeRendering="crispEdges" />
    ))}
  </Chart>
);

const NetBars = ({ values, base, y0, h, gridY }: { values: number[]; base: number; y0: number; h: number; gridY: number[] }) => (
  <Chart width={1550} height={h} viewBox={`2 ${y0} 1550 ${h}`}>
    {gridY.map((y) => (
      <Dotted key={y} y={y} />
    ))}
    {values.map((v, i) => {
      const a = cropY(Math.min(v, base));
      const b = cropY(Math.max(v, base));
      return (
        <rect
          key={i}
          x={Math.round(barX(i) - 4.5)}
          y={Math.round(a)}
          width="9"
          height={Math.max(1, Math.round(b - a))}
          fill={v <= base ? "#ff6699" : "#66ffcc"}
          shapeRendering="crispEdges"
        />
      );
    })}
  </Chart>
);

const SmallAxis = ({ y0, h, labels, ticks = [] }: { y0: number; h: number; labels: [string, number][]; ticks?: number[] }) => (
  <Chart width={55} height={h} viewBox={`1553 ${y0} 55 ${h}`}>
    {ticks.map((y) => (
      <path key={y} d={`M1553 ${y + 0.5}h3`} stroke="#808080" />
    ))}
    {labels.map(([text, y]) => (
      <ChartText key={text} x={1605 - text.length * 6} y={y} fill="#808080">{text}</ChartText>
    ))}
  </Chart>
);

const MiniChart = () => {
  const rise = (i: number) => 3 + Math.abs(Math.sin(i * 1.7)) * 2.5;
  const bars = Array.from({ length: 250 }, (_, i) => {
    const h = 24 * Math.exp(-i / 14) + rise(i) + 9 * Math.exp(-(249 - i) / 9);
    return { x: 1611 + i, h: Math.round(h), early: i < 34 && i % 3 !== 1 };
  });
  return (
    <Chart width={309} height={448} viewBox="1609 270 309 448">
      <path d="M1610.500 270v448M1868.500 281v437M1610 281.500h258M1610 429.500h258M1610 580.500h258M1609 717.500h309M1917.500 270v448" stroke="#808080" shapeRendering="crispEdges" />
      {miniGrid.map((y) => (
        <path key={y} d={`M1611 ${y + 0.5}h257`} stroke="#808080" strokeDasharray="1 3" shapeRendering="crispEdges" />
      ))}
      {[1667, 1724, 1780, 1837].map((x) => (
        <path key={x} d={`M${x}.5 281V717`} stroke="#808080" strokeDasharray="1 3" shapeRendering="crispEdges" />
      ))}
      {miniPrice.slice(1).map((p, i) => {
        const prev = miniPrice[i];
        return (
          <line key={i} x1={prev[0]} y1={prev[1]} x2={p[0]} y2={p[1]} stroke={p[1] < prev[1] ? "#800000" : "#000080"} shapeRendering="crispEdges" />
        );
      })}
      <rect x="1611" y="639" width="1" height="78" fill="#800000" />
      {bars.map((b) => (
        <rect key={b.x} x={b.x} y={717 - b.h} width="1" height={b.h} fill={b.early ? "#000" : "#800000"} />
      ))}
      <rect x="1864" y="580" width="1" height="137" fill="#800000" />
      {miniLabels.map((label, i) => (
        <ChartText key={label} x={1870} y={288.5 + i * 21.1} fill={i < 7 ? "#800000" : "#000"}>{label}</ChartText>
      ))}
      <ChartText x={1868} y={591} fill="#808080">291459</ChartText>
      <ChartCjk x={1871} y={716} fill="#000">即時</ChartCjk>
    </Chart>
  );
};

export default function App() {
  return (
    <Win>
      <GlobalStyle />
      <TitleBar>
        <TitleLogo />
        <TitleText>技術分析 - [市加權指數 $TWT]</TitleText>
        <WinControls>
          <WinButton>
            <svg width="12" height="12" viewBox="0 0 12 12"><path d="M1 6h10" stroke="#888" /></svg>
          </WinButton>
          <WinButton>
            <svg width="12" height="12" viewBox="0 0 12 12"><path d="M1.500 3.500h7v7h-7zM3.500 3V1.500h7v7H9" fill="none" stroke="#888" /></svg>
          </WinButton>
          <WinButton>
            <svg width="12" height="12" viewBox="0 0 12 12"><path d="M1 1l10 10M11 1L1 11" stroke="#888" /></svg>
          </WinButton>
        </WinControls>
      </TitleBar>
      <MenuBar>
        <Grip />
        <TitleLogo />
        <MenuItems>
          {menus.map((m) => (
            <span key={m}>{m}</span>
          ))}
        </MenuItems>
        <MenuNote>報價資訊僅供參考, 所有資訊以主管機關公告為準</MenuNote>
        <MdiButtons>
          <MdiButton>
            <svg width="8" height="8" viewBox="0 0 8 8"><path d="M1 6.500h6" stroke="#666" strokeWidth="1.500" /></svg>
          </MdiButton>
          <MdiButton>
            <svg width="10" height="10" viewBox="0 0 10 10"><path d="M1.500 4h5v4.500h-5zM3.500 3.500v-2h5V6h-2" fill="none" stroke="#556" /></svg>
          </MdiButton>
          <MdiButton $close>
            <svg width="8" height="8" viewBox="0 0 8 8"><path d="M1 1l6 6M7 1L1 7" stroke="#607080" strokeWidth="1.500" /></svg>
          </MdiButton>
        </MdiButtons>
      </MenuBar>
      <Toolbar>
        <ToolGrip />
        <Toolbar1 />
        <ToolGap>
          <ToolGapGrip />
        </ToolGap>
        <Toolbar2 />
      </Toolbar>
      <Workspace>
        <ChartColumn>
          <Panel $h={531}>
            <Plot>
              <MainChart />
              <Legend>
                <LegendLine
                  items={[
                    ["市加權指數 MA(5,10,40,60,20,0) "],
                    ["MA1:16948.10↓", "#000080"],
                    ["MA2:17102.61↓", "#ff00ff"],
                    ["MA3:16487.75↑", "#808080"],
                    ["MA4:16232.48↑", "#800000"],
                    ["MA5:16983.73↑", "#008000"],
                  ]}
                />
                <LegendLine items={[["2023/06/30 開16870.27↓高16919.95↓低16792.34↓收16915.54↓量0 額28626715↑換0.00% 振0.75% 漲(-26.76)-0.16% 指數(-26.76)-0.16%"]]} />
              </Legend>
            </Plot>
            <Axis>
              <MainAxis />
            </Axis>
          </Panel>
          <Panel $h={14}>
            <Plot>
              <DateAxis />
            </Plot>
            <Axis>
              <Chart width={55} height={13} viewBox="1553 606 55 13">
                <ChartCjk x={1570} y={617} fill="#808080">日線</ChartCjk>
              </Chart>
            </Axis>
          </Panel>
          <Panel $h={95}>
            <Plot>
              <VolumeChart />
              <Legend>
                <LegendLine
                  items={[
                    ["VOL(5,10,20) "],
                    ["MA1:2816.83↓", "#c0c0c0"],
                    ["MA2:3193.37↓", "#00ffcc"],
                    ["MA3:3128.83↓", "#ffaa99"],
                    ["量:2862.67↑", "#00bfff"],
                  ]}
                />
              </Legend>
            </Plot>
            <Axis>
              <SmallAxis y0={620} h={94} ticks={[643, 674, 706]} labels={[["4000", 646], ["2000", 677], ["0", 709]]} />
            </Axis>
          </Panel>
          <Panel $h={96}>
            <Plot>
              <NetBars values={trustBars} base={510} y0={715} h={95} gridY={[760, 798]} />
              <Legend>
                <LegendLine
                  items={[
                    ["投信買賣超(解盤)(1) "],
                    ["投信買進:38.72↑", "#000080"],
                    ["投信賣出:40.54↑", "#ff00ff"],
                    ["投信買賣超:-1.82↑", "#808080"],
                    ["昨投信買賣超:-4.50↓", "#00bfff"],
                  ]}
                />
              </Legend>
            </Plot>
            <Axis>
              <SmallAxis y0={715} h={95} ticks={[760, 769, 779, 788, 798]} labels={[["0", 763], ["-50", 802]]} />
            </Axis>
          </Panel>
          <Panel $h={93}>
            <Plot>
              <NetBars values={foreignBars} base={858} y0={811} h={92} gridY={[876]} />
              <Legend>
                <LegendLine
                  items={[
                    ["外資買賣超(解盤)(1) "],
                    ["外資買進:967.16↑", "#000080"],
                    ["外資賣出:1060.40↑", "#ff00ff"],
                    ["外資買賣超:-93.24↓", "#808080"],
                    ["昨外資買賣超:-53.37↑", "#00bfff"],
                  ]}
                />
              </Legend>
            </Plot>
            <Axis>
              <SmallAxis y0={811} h={92} ticks={[876]} labels={[["0", 879]]} />
            </Axis>
          </Panel>
          <LastPanel>
            <Plot>
              <Legend>
                <LegendLine
                  items={[
                    ["融券餘額(解盤)(1) "],
                    ["融券餘額:308269↑", "#00c060"],
                  ]}
                />
              </Legend>
            </Plot>
            <LastAxis />
          </LastPanel>
        </ChartColumn>
        <SidePanel>
          <SideTitle>
            $TWT <SideCjk>市加權指數</SideCjk>
          </SideTitle>
          <QuoteList>
            {quotes.map((q) => (
              <QuoteRow key={q.label}>
                <QuoteLabel>{q.label}</QuoteLabel>
                <QuoteValue $c={q.color}>{q.value}</QuoteValue>
              </QuoteRow>
            ))}
          </QuoteList>
          <DateRow>
            2023/06/30
            <svg width="14" height="14" viewBox="0 0 14 14">
              <circle cx="7" cy="7" r="6" fill="none" stroke="#888" />
              <path d="M7 1v12M1 7h12" stroke="#888" />
            </svg>
          </DateRow>
          <MiniChart />
        </SidePanel>
      </Workspace>
    </Win>
  );
}
